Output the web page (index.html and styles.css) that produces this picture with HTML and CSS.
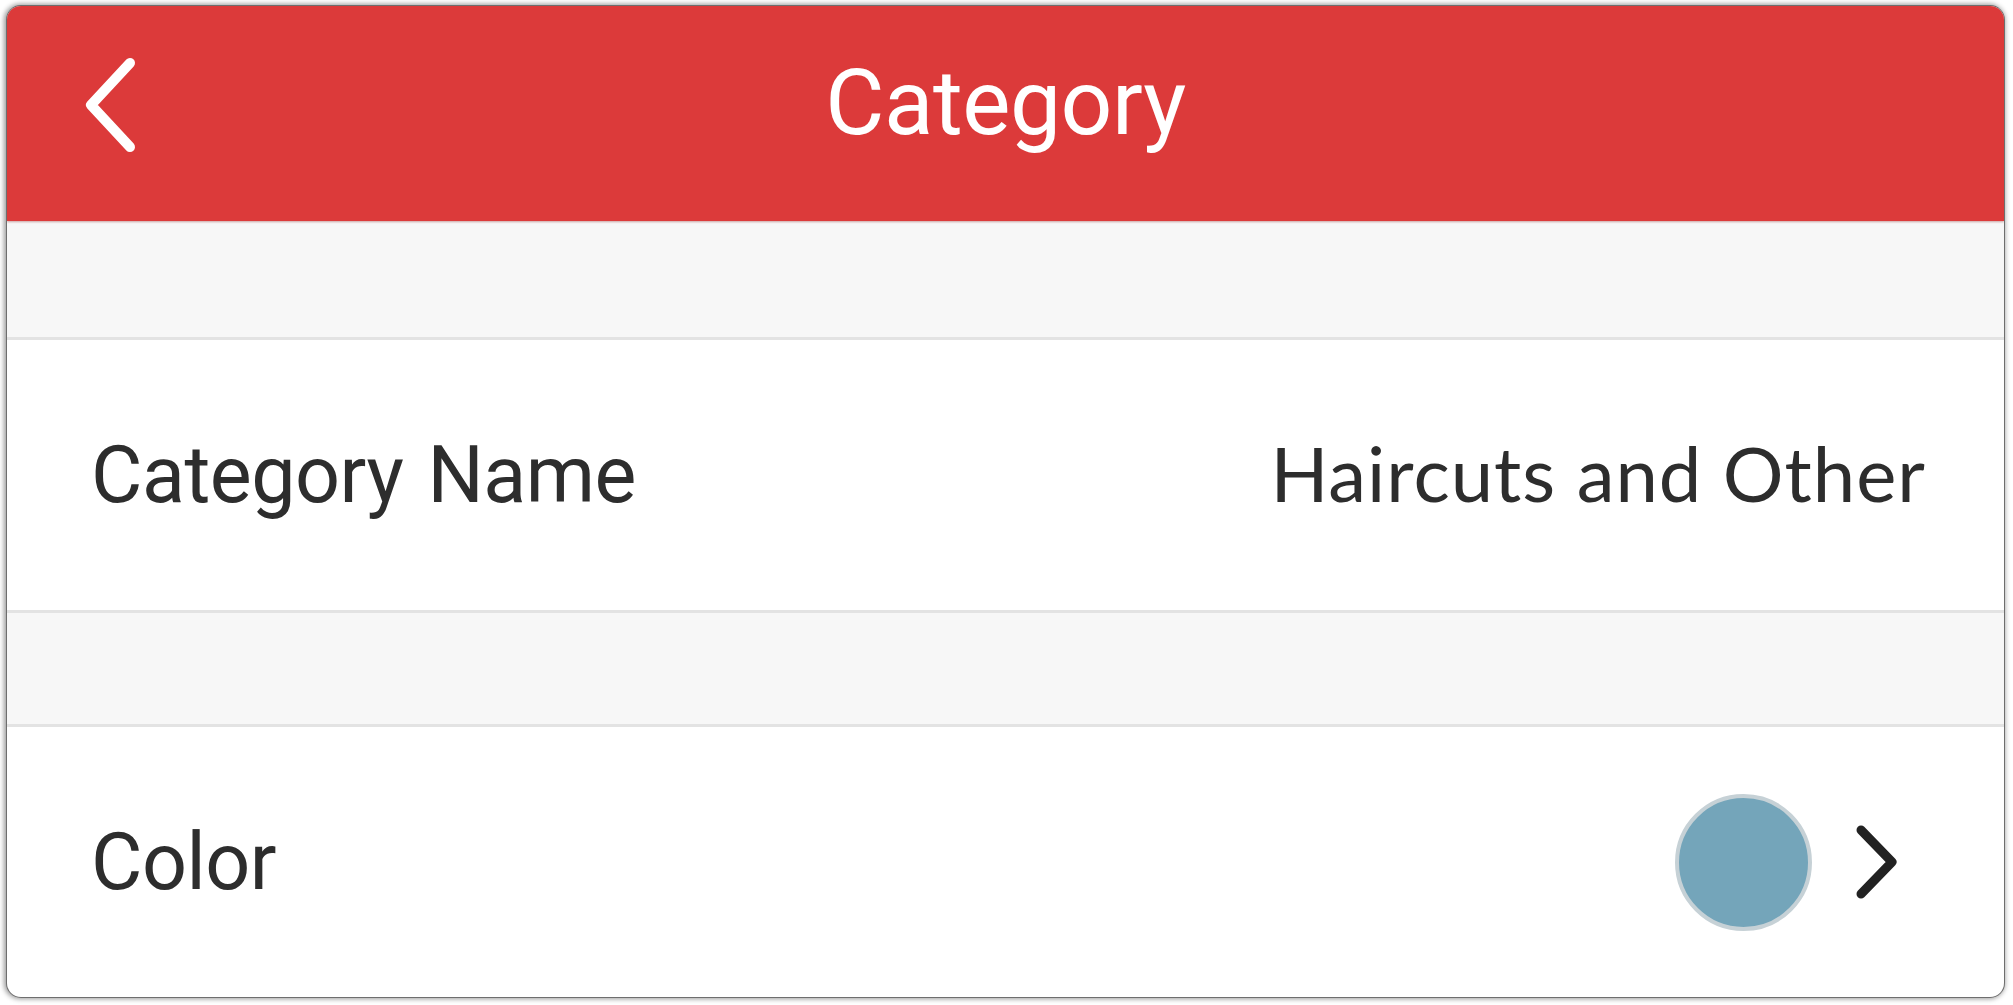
FILE: index.html
```html
<!DOCTYPE html>
<html>
<head>
<meta charset="utf-8">
<title>Category</title>
<link rel="stylesheet" href="styles.css">
</head>
<body>
<div class="card">
  <div class="topbar">
    <a class="back" href="#">
      <svg width="60" height="100" viewBox="0 0 60 100">
        <polyline points="47,8 8,50 47,92" fill="none" stroke="#fff" stroke-width="10" stroke-linecap="round" stroke-linejoin="round"/>
      </svg>
    </a>
    <h1 class="title">Category</h1>
  </div>

  <div class="spacer first"></div>

  <div class="row">
    <span class="label">Category Name</span>
    <span class="value">Haircuts and Other</span>
  </div>

  <div class="spacer second"></div>

  <div class="row last">
    <span class="label">Color</span>
    <span class="pick">
      <span class="swatch"></span>
      <svg class="more" width="46" height="84" viewBox="0 0 46 84">
        <polyline points="7,10 38,42 7,74" fill="none" stroke="#222" stroke-width="9" stroke-linecap="round" stroke-linejoin="round"/>
      </svg>
    </span>
  </div>
</div>
</body>
</html>
```

FILE: styles.css
```css
html, body {
	margin: 0;
	height: 100%;
	background: #fff;
}
body {
	padding: 6px 9px 8px 7px;
	box-sizing: border-box;
	font-family: Roboto, "Liberation Sans", sans-serif;
	color: #2b2b2b;
}

.card {
	height: 100%;
	display: flex;
	flex-direction: column;
	border-radius: 14px;
	overflow: hidden;
	background: #fff;
	box-shadow: 0 0 0 1px #6e6e6e, -1px 0 5px 2px rgba(0,0,0,0.4);
}

/* red bar on top */
.topbar {
	height: 215px;
	flex: none;
	position: relative;
	display: flex;
	align-items: center;
	justify-content: center;
	background: #dc3a3a;
	box-shadow: 0 1px 2px rgba(120,0,0,0.35);
	z-index: 1;
}
.back {
	position: absolute;
	left: 76px;
	top: 49px;
	display: block;
	line-height: 0;
}
.back svg {
	display: block;
}
.title {
	margin: 0 0 22px 0;
	font-size: 91px;
	font-weight: 400;
	color: #fff;
	letter-spacing: -0.5px;
}

/* grey gaps between groups */
.spacer {
	flex: none;
	background: #f7f7f7;
	border-bottom: 3px solid #e3e3e3;
}
.spacer.first { height: 116px; }
.spacer.second { height: 111px; }

.row {
	flex: none;
	height: 270px;
	display: flex;
	align-items: center;
	justify-content: space-between;
	padding: 0 78px 0 84px;
	border-bottom: 3px solid #e3e3e3;
}
.row.last {
	flex: 1;
	border-bottom: none;
	padding-right: 104px;
}
.label {
	font-size: 79px;
	color: #2d2d2d;
	letter-spacing: -0.5px;
	word-spacing: 5px;
}
.value {
	font-family: Lato, "Open Sans", sans-serif;
	font-size: 76px;
	font-weight: 400;
	color: #2d2d2d;
	letter-spacing: 1px;
	margin-top: -6px;
}

.pick {
	display: flex;
	align-items: center;
	gap: 42px;
}
.swatch {
	width: 129px;
	height: 129px;
	border-radius: 50%;
	background: #74a5ba;
	border: 4px solid #c6d1d6;
}
.more {
	display: block;
}
```
